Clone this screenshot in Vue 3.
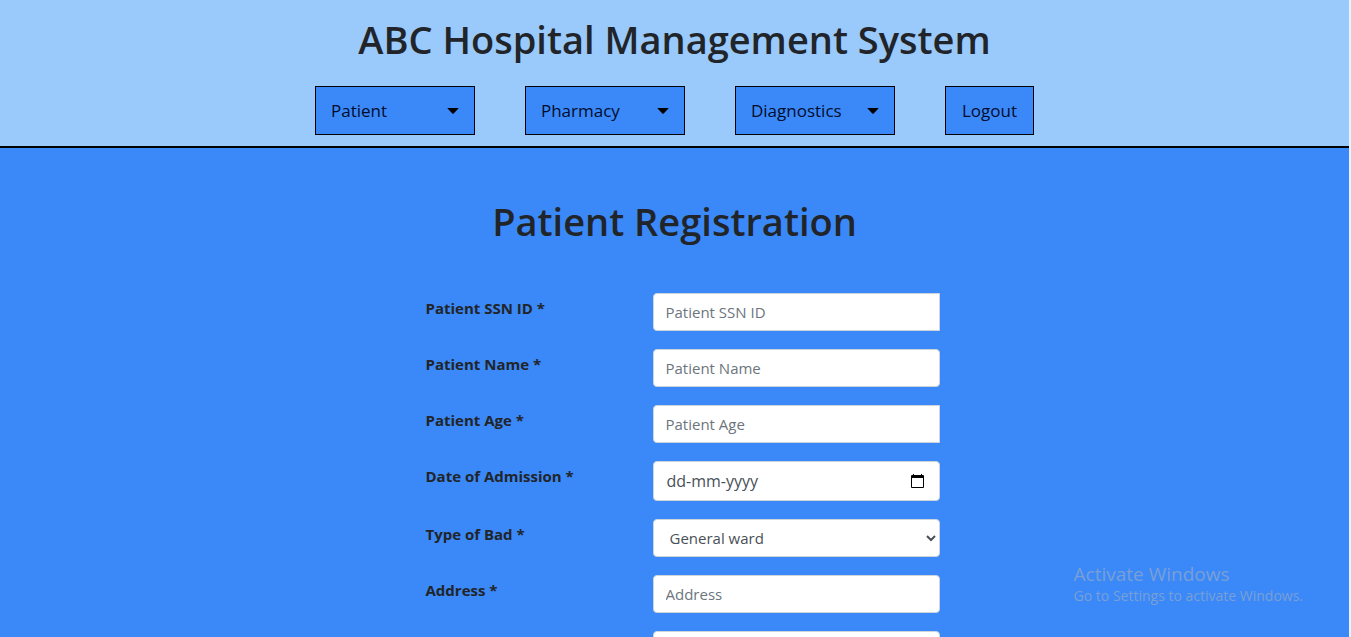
<script setup>
const menus = ['Patient', 'Pharmacy', 'Diagnostics']

const fields = [
  { id: 'ssn', label: 'Patient SSN ID *', kind: 'number', placeholder: 'Patient SSN ID' },
  { id: 'name', label: 'Patient Name *', kind: 'text', placeholder: 'Patient Name' },
  { id: 'age', label: 'Patient Age *', kind: 'number', placeholder: 'Patient Age' },
  { id: 'admission', label: 'Date of Admission *', kind: 'date', placeholder: 'dd-mm-yyyy' },
  { id: 'bed', label: 'Type of Bad *', kind: 'select', options: ['General ward'] },
  { id: 'address', label: 'Address *', kind: 'text', placeholder: 'Address' },
  { id: 'address2', label: '', kind: 'text', placeholder: '' },
]
</script>

<template>
  <div class="page">
    <header class="header">
      <h1>ABC Hospital Management System</h1>
      <nav class="nav">
        <button v-for="menu in menus" :key="menu" type="button" class="nav-item menu">
          {{ menu }}
          <svg class="caret" width="12" height="6" viewBox="0 0 12 6" aria-hidden="true">
            <path d="M1 0h10q1 0 .4.6L6.7 5.5q-.7.7-1.4 0L.6.6Q0 0 1 0z" fill="#000" />
          </svg>
        </button>
        <a href="#" class="nav-item">Logout</a>
      </nav>
    </header>

    <main class="main">
      <h1>Patient Registration</h1>
      <form class="form" @submit.prevent>
        <div v-for="field in fields" :key="field.id" class="row">
          <label :for="field.id">{{ field.label }}</label>
          <select v-if="field.kind === 'select'" :id="field.id" class="control select">
            <option v-for="option in field.options" :key="option">{{ option }}</option>
          </select>
          <div v-else-if="field.kind === 'date'" class="control date">
            <input :id="field.id" type="text" :placeholder="field.placeholder" />
            <button type="button" aria-label="Choose date">
              <svg width="13" height="14" viewBox="0 0 13 14" aria-hidden="true">
                <path
                  d="M1 1h1V0h1v1h7V0h1v1h1q1 0 1 1v11q0 1-1 1H1q-1 0-1-1V2q0-1 1-1zM1 4v9h11V4z"
                  fill="#000"
                  fill-rule="evenodd"
                />
              </svg>
            </button>
          </div>
          <input
            v-else
            :id="field.id"
            :type="field.kind"
            :class="['control', field.kind]"
            :placeholder="field.placeholder"
          />
        </div>
      </form>
    </main>

    <aside class="notice">
      <p class="notice-title">Activate Windows</p>
      <p class="notice-text">Go to Settings to activate Windows.</p>
    </aside>
  </div>
</template>

<style>
body {
  margin: 0;
  background: #3b89f8;
}
</style>

<style scoped>
.page {
  box-sizing: border-box;
  height: 100vh;
  overflow: hidden;
  border-right: 2px solid #e6f2fd;
  background: #3b89f8;
  color: #212529;
  font-family: "Open Sans", "Noto Sans", sans-serif;
  font-size: 15px;
  line-height: 24px;
}

h1 {
  margin: 0;
  font-size: 38px;
  font-weight: 600;
  line-height: 48px;
  text-align: center;
}

.header {
  padding: 15px 0 11px;
  border-bottom: 2px solid #000;
  background: #9ac9fb;
}

.nav {
  display: flex;
  justify-content: center;
  gap: 50px;
  margin-top: 23px;
}

.nav-item {
  box-sizing: border-box;
  display: flex;
  align-items: center;
  justify-content: space-between;
  height: 49px;
  padding: 0 16px;
  border: 1px solid #000;
  border-radius: 0;
  background: #3b89f8;
  color: #000c2c;
  font-family: inherit;
  font-size: 17px;
  font-weight: 400;
  text-decoration: none;
}

.menu {
  width: 160px;
  padding: 0 15px;
}

.main {
  padding-top: 49px;
}

.form {
  display: flex;
  flex-direction: column;
  gap: 18px;
  width: 514px;
  margin: 48px auto 0;
  padding-left: 16px;
}

.row {
  display: grid;
  grid-template-columns: 227px 1fr;
  align-items: start;
}

label {
  padding-top: 3px;
  font-weight: 700;
}

.control {
  box-sizing: border-box;
  width: 100%;
  height: 38px;
  padding: 6px 12px;
  border: 1px solid #ced4da;
  border-radius: 4px;
  background: #fff;
  color: #495057;
  font: inherit;
}

.number {
  border-radius: 4px 0 0 4px;
}

.control::placeholder {
  color: #6c757d;
  opacity: 1;
}

.date {
  display: flex;
  align-items: center;
  justify-content: space-between;
  height: 40px;
  padding: 0 15px 0 13px;
}

.date input {
  flex: 1;
  min-width: 0;
  padding: 0;
  border: 0;
  background: none;
  color: #495057;
  font: inherit;
  font-size: 16px;
}

.date input::placeholder {
  color: #495057;
  opacity: 1;
}

.date button {
  display: flex;
  padding: 0;
  border: 0;
  background: none;
}

.notice {
  position: absolute;
  right: 48px;
  bottom: 31px;
  color: #799fd6;
}

.notice p {
  margin: 0;
}

.notice-title {
  font-size: 19px;
}

.notice-text {
  font-size: 14px;
  line-height: 20px;
}
</style>
